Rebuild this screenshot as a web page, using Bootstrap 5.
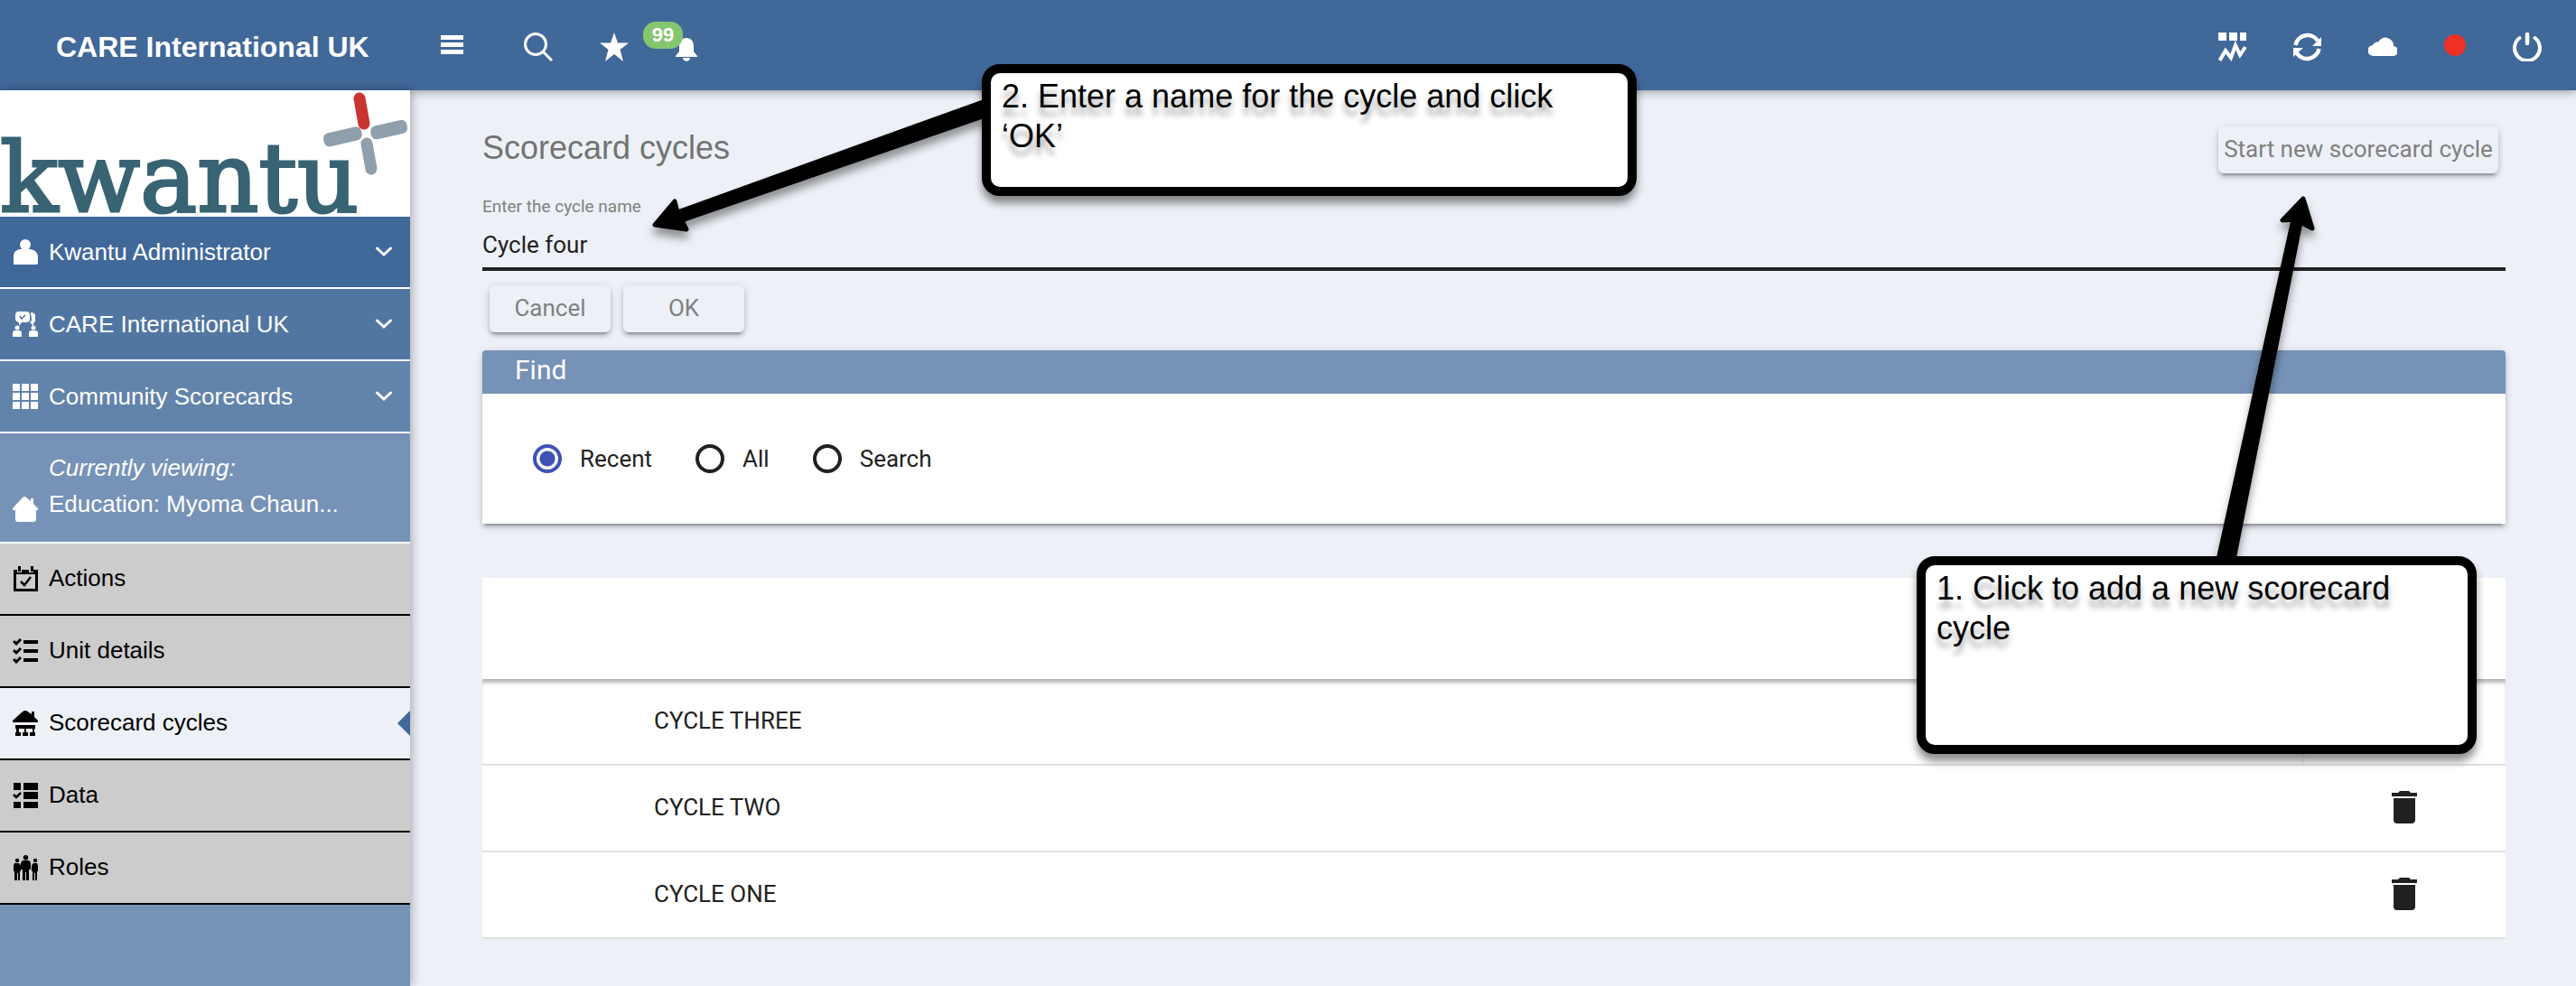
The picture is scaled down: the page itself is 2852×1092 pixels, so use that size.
<!DOCTYPE html>
<html lang="en">
<head>
<meta charset="utf-8">
<meta name="viewport" content="width=device-width, initial-scale=1">
<title>Scorecard cycles</title>
<link href="https://cdn.jsdelivr.net/npm/bootstrap@5.3.0/dist/css/bootstrap.min.css" rel="stylesheet">
<style>
:root{--navy:#406899;--sky:#7692b7;--paper:#edf1f7;--ink:#212121;--raise:0 6px 2px -4px rgba(0,0,0,.2),0 4px 4px rgba(0,0,0,.16),0 2px 10px rgba(0,0,0,.14)}
body{background:var(--paper);color:var(--ink);font:26px/40px Roboto,sans-serif}
.helv{font-family:"Liberation Sans",Arial,sans-serif}
svg{display:block;flex:none;fill:currentColor}
button.plain{border:0;background:none;padding:0;color:inherit}
.topbar{height:100px;background:var(--navy);color:#fff;padding:0 38px 0 62px;box-shadow:0 2px 10px rgba(0,0,0,.35);z-index:2}
.brand{width:426px;font-size:32px;font-weight:700;line-height:40px;padding-top:20px;padding-bottom:16px;color:#fff;text-decoration:none}
.tools-left>.find-tool{margin-left:67px}
.tools-left>.star-tool,.tools-left>.bell-tool{margin-left:52px}
.tools-right{gap:52px;padding-top:4px}
.tools-left{padding-top:4px}
.count{position:absolute;right:16px;bottom:14px;width:44px;height:30px;border-radius:14px;background:#86c66f;font:700 22px/30px "Liberation Sans",sans-serif;text-align:center}
.side{width:454px;background:var(--sky);box-shadow:2px 0 10px rgba(0,0,0,.3);z-index:3}
.logo{height:140px}
.logo text{font:106px "DejaVu Serif",serif;fill:#386373;stroke:#386373;stroke-width:3px}
.side a{color:#fff;text-decoration:none;padding:0 20px 0 14px;gap:12px;height:80px;border-bottom:2px solid #fff}
.side a.lvl1{background:var(--navy)}
.side a.lvl2{background:#5276a2}
.side a.lvl3{background:#6284ab}
.side a.viewing{height:122px;padding-bottom:22px}
.side a.leaf{background:#ccc;color:#000;border-color:#000}
.side a.leaf span{padding-bottom:2px}
.side a.leaf.current{background:var(--paper);position:relative}
.current::after{content:"";position:absolute;right:0;top:25px;border:14px solid transparent;border-left:0;border-right-color:var(--navy)}
.content{padding:40px 78px 40px 80px}
h1{font-size:36px;line-height:40px;color:#737373;margin:0;padding-top:4px}
.raised{height:52px;border:0;border-radius:6px;background:var(--paper);color:#808080;font-size:26px;line-height:50px;padding:0 0 2px;box-shadow:var(--raise)}
.wide{width:310px;margin-right:8px}
.small-btn{width:134px}
.name-label{font-size:19px;line-height:24px;color:#808080;padding-top:25px}
.name-box{border:0;border-bottom:4px solid var(--ink);border-radius:0;background:none!important;padding:10px 0 5px;height:59px;font-size:26px;line-height:40px;color:var(--ink);box-shadow:none!important}
.pair{gap:14px;padding:16px 8px 20px}
.finder{border:0;border-radius:4px 4px 0 0;box-shadow:var(--raise)}
.finder-title{background:var(--sky);color:#fff;font-size:30px;line-height:40px;padding:2px 36px 6px;margin:0;font-weight:400;border-radius:4px 4px 0 0}
.choices{padding:52px 56px;gap:48px}
.choices label{gap:20px}
.dot{appearance:none;width:32px;height:32px;border:4px solid var(--ink);border-radius:50%;margin:0}
.dot:checked{border-color:#3f51b5;background:radial-gradient(circle,#3f51b5 8px,transparent 9px)}
.cycles{margin:60px 0 0;background:#fff;border-collapse:separate;border-spacing:0}
.cycles th{height:112px;padding:0;border:0;background:#fff}
.cycles tbody{border:0}
.cycles td{height:96px;padding:0 0 2px;border:0;border-bottom:2px solid #e1e1e1;background:#fff;color:var(--ink);vertical-align:middle;font-size:26px}
.cycles tr:first-child td{box-shadow:inset 0 6px 4px -2px rgba(0,0,0,.3)}
.cycles td:first-child{padding-left:190px}
.cycles td:last-child{width:224px}
.note{position:absolute;z-index:6;background:#fff;border:10px solid #000;border-radius:20px;padding:4px 12px;font-size:36px;line-height:44px;color:#000;text-shadow:0 9px 6px rgba(0,0,0,.35);box-shadow:0 8px 10px rgba(0,0,0,.45)}
.note-name{left:1087px;top:71px;width:725px;height:146px}
.note-start{right:110px;top:616px;width:620px;height:219px}
.pointer{position:absolute;z-index:5;filter:drop-shadow(0 8px 5px rgba(0,0,0,.4));overflow:visible}
.pointer path{fill:#000;stroke:#000;stroke-width:5;stroke-linejoin:round}
.pointer-name{left:720px;top:100px}
.pointer-start{right:280px;top:210px}
</style>
<script src="https://cdn.jsdelivr.net/npm/bootstrap@5.3.0/dist/js/bootstrap.bundle.min.js"></script>
</head>
<body class="position-relative min-vh-100 d-flex flex-column">
<header class="topbar helv d-flex align-items-center position-relative">
  <a class="brand" href="#">CARE International UK</a>
  <div class="tools-left d-flex align-items-center">
    <button class="plain" aria-label="Menu"><svg width="25" height="26" viewBox="0 0 25 26"><path d="M0 0h25v5H0zM0 8h25v5H0zM0 16h25v5H0z"/></svg></button>
    <button class="plain find-tool" aria-label="Search"><svg width="32" height="32" viewBox="0 0 32 32"><g fill="none" stroke="currentColor" stroke-width="3"><circle cx="13" cy="13" r="11.5"/><path d="M21 21l10 10"/></g></svg></button>
    <button class="plain star-tool" aria-label="Favourites"><svg width="32" height="32" viewBox="0 0 32 32"><path d="M16 0l4 11.500H32l-9.500 7.500L26 32l-10-8-10 8 3.500-13L0 11.500h12z"/></svg></button>
    <button class="plain bell-tool position-relative" aria-label="Notifications"><svg width="24" height="32" viewBox="0 0 24 32"><path d="M12 6c6 0 8 5 8 9v6l4 5v1H0v-1l4-5v-6c0-4 2-9 8-9zM8 28h8c0 5-8 5-8 0z"/></svg><span class="count">99</span></button>
  </div>
  <div class="tools-right d-flex align-items-center ms-auto">
    <button class="plain" aria-label="Reports"><svg width="31" height="32" viewBox="0 0 31 32"><path d="M0 0h9v9H0zM12 0h9v9h-9zM24 0h7v9h-7z"/><path d="M1.500 31L8 20l6 8 5-14 5 11 6-9" fill="none" stroke="currentColor" stroke-width="4"/></svg></button>
    <button class="plain" aria-label="Refresh"><svg width="31" height="32" viewBox="0 0 31 32"><path d="M2.500 14A13.500 13.500 0 0 1 27 9M28.500 18A13.500 13.500 0 0 1 4 23" fill="none" stroke="currentColor" stroke-width="4.500"/><path d="M31 5v10H21zM0 27V17h11z"/></svg></button>
    <button class="plain" aria-label="Cloud"><svg width="32" height="32" viewBox="0 0 32 32"><path d="M6 26a6 6 0 0 1-1-12 6 6 0 0 1 6-3.500 9 9 0 0 1 17 4.500 5.500 5.500 0 0 1-1 11z"/></svg></button>
    <button class="plain" aria-label="Status"><svg width="24" height="32" viewBox="0 0 24 32"><circle cx="12" cy="14" r="12" fill="#ee3124"/></svg></button>
    <button class="plain" aria-label="Log out"><svg width="32" height="32" viewBox="0 0 32 32"><g fill="none" stroke="currentColor" stroke-width="4" stroke-linecap="round"><path d="M7.500 6A14 14 0 1 0 24.500 6"/><path d="M16 2v10" stroke-width="4.500"/></g></svg></button>
  </div>
</header>
<div class="d-flex flex-grow-1">
  <nav class="side helv flex-shrink-0">
    <div class="logo bg-white"><svg width="454" height="140" viewBox="0 0 454 140" role="img" aria-label="kwantu">
      <text x="0" y="134">kwantu</text>
      <g stroke-linecap="round" stroke-width="13" fill="none"><path stroke="#c93431" d="M398 9l5 28"/><path stroke="#8f9fac" d="M406 59l5 28"/></g>
      <g fill="#8f9fac"><rect x="358" y="44" width="43" height="15" rx="6" transform="rotate(-13 379 52)"/><rect x="410" y="36" width="41" height="15" rx="6" transform="rotate(-13 431 43)"/></g></svg></div>
    <a href="#" class="lvl1 d-flex align-items-center"><svg width="28" height="28" viewBox="0 0 28 28"><circle cx="14" cy="6" r="6"/><path d="M1 28V19q0-7 7-8h12q7 1 8 8v7q0 2-2 2z"/></svg><span>Kwantu Administrator</span><svg class="ms-auto" width="18" height="12" viewBox="0 0 18 12"><path d="M1.500 2L9 9l7.500-7" fill="none" stroke="currentColor" stroke-width="3" stroke-linecap="round"/></svg></a>
    <a href="#" class="lvl2 d-flex align-items-center"><svg width="28" height="28" viewBox="0 0 28 28"><path d="M7 0h8q4 0 4 4v5q0 3-4 3h-5l-3 4v-4q-4-1-4-4V4q0-4 4-4z"/><path d="M20 1q5 0 5 4v5q0 2-2 3v3l-4-4q2-1 2-3z"/><path d="M8 5l2 3 4-4" fill="none" stroke="#5276a2" stroke-width="1.500"/><circle cx="5" cy="18" r="2.500"/><circle cx="23" cy="18" r="2.500"/><path d="M0 28v-4q0-3 3-3h4q3 0 3 3v4zM18 28v-4q0-3 3-3h4q3 0 3 3v4z"/></svg><span>CARE International UK</span><svg class="ms-auto" width="18" height="12" viewBox="0 0 18 12"><path d="M1.500 2L9 9l7.500-7" fill="none" stroke="currentColor" stroke-width="3" stroke-linecap="round"/></svg></a>
    <a href="#" class="lvl3 d-flex align-items-center"><svg width="28" height="28" viewBox="0 0 28 28"><path d="M0 0h8v8H0zM10 0h8v8h-8zM20 0h8v8h-8zM0 10h8v8H0zM10 10h8v8h-8zM20 10h8v8h-8zM0 20h8v8H0zM10 20h8v8h-8zM20 20h8v8h-8z"/></svg><span>Community Scorecards</span><svg class="ms-auto" width="18" height="12" viewBox="0 0 18 12"><path d="M1.500 2L9 9l7.500-7" fill="none" stroke="currentColor" stroke-width="3" stroke-linecap="round"/></svg></a>
    <a href="#" class="viewing d-flex align-items-end"><svg width="28" height="28" viewBox="0 0 28 28"><path d="M14 0l6 5V2h3v6l5 5v2h-2v10q0 3-3 3H6q-3 0-3-3V15H0v-2L11 1q1-1 3-1z"/></svg><span class="text-truncate"><em>Currently viewing:</em><br>Education: Myoma Chaun...</span></a>
    <a href="#" class="leaf d-flex align-items-center"><svg width="28" height="28" viewBox="0 0 28 28"><path fill-rule="evenodd" d="M1 4h4v3h5V4h8v3h5V4h5v24H1zM4 9v16h21V9z"/><path d="M6 0h3v6H6zM20 0h3v6h-3z"/><path d="M9 17l4 4 7-9" fill="none" stroke="#000" stroke-width="2.500"/></svg><span>Actions</span></a>
    <a href="#" class="leaf d-flex align-items-center"><svg width="28" height="28" viewBox="0 0 28 28"><path d="M12 2h16v4H12zM12 12h16v4H12zM12 22h16v4H12z"/><path d="M1 3l3 3 5-5M1 13l3 3 5-5M1 23l3 3 5-5" fill="none" stroke="#000" stroke-width="3"/></svg><span>Unit details</span></a>
    <a href="#" class="leaf current d-flex align-items-center" aria-current="page"><svg width="28" height="28" viewBox="0 0 28 28"><path d="M14 0q2 0 4 2l3 2V1h3v6l4 4v2H0v-2L10 2q2-2 4-2zM3 16h22v4h-1v4h1v4h-6v-4h3v-4h-7v4h2v4h-6v-4h2v-4H7v4h2v4H3v-4h1v-4H3z"/></svg><span>Scorecard cycles</span></a>
    <a href="#" class="leaf d-flex align-items-center"><svg width="28" height="28" viewBox="0 0 28 28"><path d="M1 0h8v8H1zM12 0h16v8H12zM12 10h16v8H12zM12 21h16v7H12zM1 21h8v7H1z"/><path d="M1 13l3 3 5-5" fill="none" stroke="#000" stroke-width="2.500"/></svg><span>Data</span></a>
    <a href="#" class="leaf d-flex align-items-center"><svg width="28" height="28" viewBox="0 0 28 28"><circle cx="14.500" cy="2.800" r="2.800"/><circle cx="5" cy="6" r="2.200"/><circle cx="25" cy="6" r="2.200"/><path d="M11 6h7q2 1 2 4v6h-2v12h-3v-9h-1v9h-3V16H9v-6q0-3 2-4zM2 9h5q2 1 2 4v5H8v10H6v-8H5v8H2V18H1v-5q0-3 1-4zM23 9h4q1 1 1 4v5h-1v10h-2v-8h-1v8h-2V18h-1v-5q0-3 2-4z"/></svg><span>Roles</span></a>
  </nav>
  <main class="content flex-grow-1">
    <div class="d-flex justify-content-between">
      <h1 class="helv fw-normal">Scorecard cycles</h1>
      <button class="btn raised wide">Start new scorecard cycle</button>
    </div>
    <form>
      <label class="name-label d-block" for="cycleName">Enter the cycle name</label>
      <input class="form-control name-box" id="cycleName" type="text" value="Cycle four">
      <div class="pair d-flex">
        <button class="btn raised small-btn" type="button">Cancel</button>
        <button class="btn raised small-btn" type="button">OK</button>
      </div>
    </form>
    <section class="card finder">
      <h2 class="finder-title">Find</h2>
      <div class="choices d-flex">
        <label class="d-flex align-items-center"><input class="dot" type="radio" name="scope" checked>Recent</label>
        <label class="d-flex align-items-center"><input class="dot" type="radio" name="scope">All</label>
        <label class="d-flex align-items-center"><input class="dot" type="radio" name="scope">Search</label>
      </div>
    </section>
    <table class="table cycles">
      <thead><tr><th colspan="2"></th></tr></thead>
      <tbody>
        <tr><td>CYCLE THREE</td><td><button class="plain d-block mx-auto" aria-label="Delete cycle three"><svg width="28" height="36" viewBox="0 0 28 36"><path d="M0 2h7l2-2h10l2 2h7v4H0zM2 8h24v24q0 4-4 4H6q-4 0-4-4z"/></svg></button></td></tr>
        <tr><td>CYCLE TWO</td><td><button class="plain d-block mx-auto" aria-label="Delete cycle two"><svg width="28" height="36" viewBox="0 0 28 36"><path d="M0 2h7l2-2h10l2 2h7v4H0zM2 8h24v24q0 4-4 4H6q-4 0-4-4z"/></svg></button></td></tr>
        <tr><td>CYCLE ONE</td><td><button class="plain d-block mx-auto" aria-label="Delete cycle one"><svg width="28" height="36" viewBox="0 0 28 36"><path d="M0 2h7l2-2h10l2 2h7v4H0zM2 8h24v24q0 4-4 4H6q-4 0-4-4z"/></svg></button></td></tr>
      </tbody>
    </table>
  </main>
</div>
<svg class="pointer pointer-name" width="380" height="170" viewBox="0 0 380 170"><path d="M5 149L27 123L30 135L368 13V29L35 144L40 154Z"/></svg>
<svg class="pointer pointer-start" width="120" height="420" viewBox="0 0 120 420"><path d="M98 10L75 34L87 33L4 410H21L95 36L108 43Z"/></svg>
<aside class="note note-name helv">2. Enter a name for the cycle and click ‘OK’</aside>
<aside class="note note-start helv">1. Click to add a new scorecard cycle</aside>
</body>
</html>
